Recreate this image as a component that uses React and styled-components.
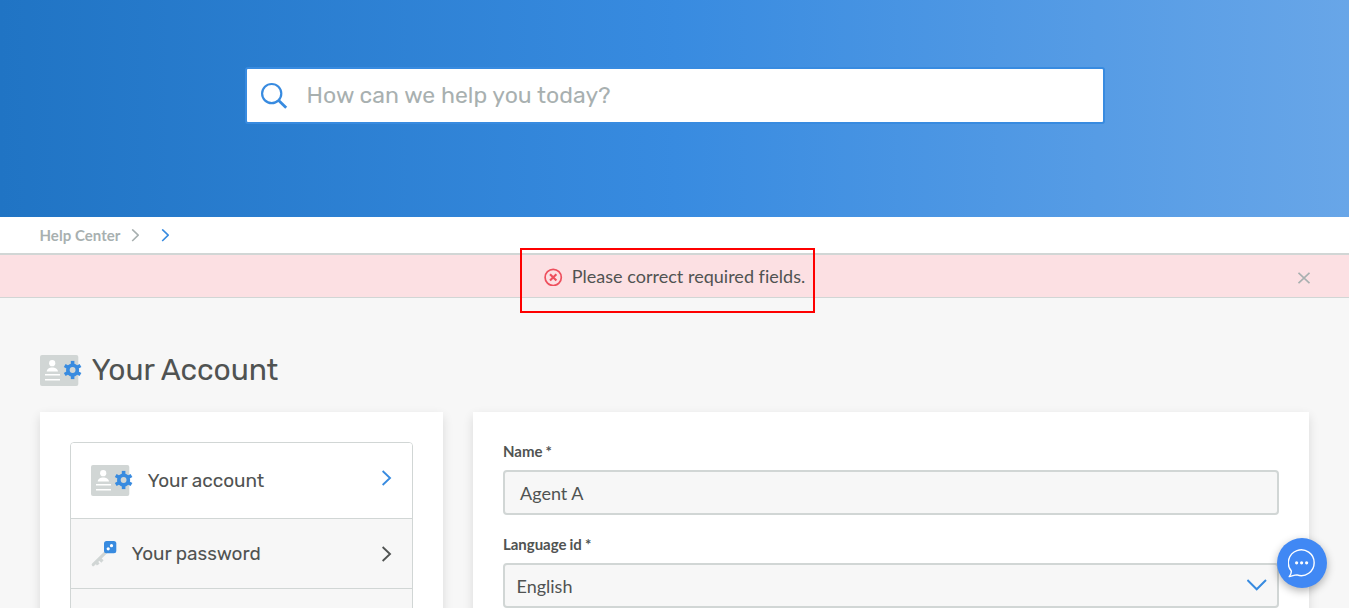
import React from "react";
import styled, { createGlobalStyle } from "styled-components";

const Global = createGlobalStyle`
  *, *::before, *::after { box-sizing: border-box; }
  body {
    margin: 0;
    background: #f7f7f7;
    color: #505352;
    font-family: Lato, "Liberation Sans", sans-serif;
    overflow: hidden;
  }
  svg { display: block; flex: none; }
`;

const heading = `font-family: Rubik, Inter, "Liberation Sans", sans-serif; font-weight: 400;`;

const Page = styled.div`
  position: relative;
  height: 608px;
  overflow: hidden;
`;

const Hero = styled.header`
  height: 217px;
  padding-top: 67px;
  display: flex;
  justify-content: center;
  align-items: flex-start;
  background: linear-gradient(90deg, #2074c4 0%, #388be0 50%, #68a6e8 100%);
`;

const SearchBox = styled.label`
  display: flex;
  align-items: center;
  width: 860px;
  height: 57px;
  margin-left: 1px;
  padding-left: 12px;
  gap: 18.5px;
  border: 2px solid #388be0;
  border-radius: 3px;
  background: #fff;
`;

const SearchInput = styled.input`
  flex: 1;
  border: 0;
  outline: 0;
  padding: 0 0 2px;
  background: transparent;
  ${heading}
  font-size: 23px;
  letter-spacing: 0.04px;
  &::placeholder { color: #a8b0b0; opacity: 1; }
`;

const Breadcrumbs = styled.nav`
  display: flex;
  align-items: center;
  gap: 22px;
  height: 38px;
  padding: 0 40px 0 39.5px;
  border-bottom: 2px solid #d1d6d5;
  background: #fff;
  font-size: 15px;
  font-weight: 700;
  letter-spacing: 0.04px;
  color: #a8b0b0;
`;

const Crumb = styled.span`
  display: flex;
  align-items: center;
  gap: 11px;
`;

const Alert = styled.div`
  display: grid;
  grid-template-columns: 1fr auto 1fr;
  align-items: center;
  height: 43px;
  padding: 0 39px 0 40px;
  border-bottom: 1px solid #d1d6d5;
  background: #fce0e3;
`;

const AlertText = styled.div`
  grid-column: 2;
  display: flex;
  align-items: center;
  gap: 9px;
  margin-left: -1px;
  font-size: 18px;
  letter-spacing: 0.02px;
  line-height: 24px;
`;

const Close = styled.button`
  justify-self: end;
  display: flex;
  padding: 3px 0 0;
  border: 0;
  background: none;
`;

const Highlight = styled.div`
  position: absolute;
  left: 520px;
  top: 248px;
  width: 295px;
  height: 65px;
  border: 2px solid #fe0000;
`;

const TitleRow = styled.div`
  display: flex;
  align-items: center;
  gap: 9.5px;
  height: 114px;
  padding: 31px 40px 0;
`;

const Title = styled.h1`
  margin: 0 0 1px;
  ${heading}
  font-size: 30px;
  line-height: 36px;
  letter-spacing: -0.06px;
`;

const Columns = styled.main`
  display: flex;
  gap: 30px;
  padding: 0 40px;
`;

const Card = styled.section`
  flex: ${(p) => (p.$width ? `0 0 ${p.$width}px` : 1)};
  height: 500px;
  padding: 30px;
  background: #fff;
  box-shadow: 0 4px 10px rgba(0, 0, 0, 0.12);
`;

const Menu = styled.ul`
  margin: 0;
  padding: 0;
  list-style: none;
  border: 1px solid #d1d6d5;
  border-radius: 4px;
  overflow: hidden;
`;

const MenuItem = styled.li`
  display: flex;
  align-items: center;
  height: ${(p) => (p.$active ? 76 : 70)}px;
  padding: 0 20px;
  border-bottom: 1px solid #d1d6d5;
  background: ${(p) => (p.$active ? "#fff" : "#f7f7f7")};
`;

const MenuLabel = styled.span`
  flex: 1;
  margin-left: 14.5px;
  ${heading}
  font-size: 19px;
  line-height: 24px;
  letter-spacing: -0.03px;
`;

const ArrowSlot = styled.span`
  padding-bottom: ${(p) => p.$lift || 0}px;
`;

const Field = styled.div`
  display: flex;
  flex-direction: column;
  margin-bottom: 20px;
`;

const Label = styled.label`
  height: 28px;
  line-height: 18px;
  font-size: 15px;
  font-weight: 700;
  letter-spacing: -0.03px;
  word-spacing: -0.5px;
`;

const Control = styled.div`
  display: flex;
  align-items: center;
  justify-content: space-between;
  height: 45px;
  padding: 0 9px 0 ${(p) => p.$indent}px;
  border: 2px solid #d1d6d5;
  border-radius: 4px;
  background: #f7f7f7;
  font-size: 18px;
`;

const ChatButton = styled.button`
  position: absolute;
  left: 1277px;
  top: 538px;
  width: 50px;
  height: 50px;
  padding: 0;
  border: 0;
  border-radius: 50%;
  display: flex;
  align-items: center;
  justify-content: center;
  background: #4088f4;
  box-shadow: 0 3px 8px rgba(0, 0, 0, 0.3);
`;

const SmallChevron = ({ color }) => (
  <svg width="8" height="13" viewBox="0 0 8 13" fill="none" stroke={color} strokeWidth="1.6">
    <path d="M1.2 0.4 L7.2 6.2 L1.2 12" />
  </svg>
);

const Chevron = ({ color }) => (
  <svg width="10" height="16" viewBox="0 0 10 16" fill="none" stroke={color} strokeWidth="1.9">
    <path d="M0.6 1 L8 8 L0.6 15" />
  </svg>
);

const AccountIcon = () => (
  <svg width="42" height="31" viewBox="0 0 42 31">
    <rect width="38.3" height="31" rx="2" fill="#d1d6d5" />
    <circle cx="12.2" cy="8.2" r="3.1" fill="#fff" />
    <path d="M6.7 16.6 C7 13.5 9.4 12.5 12.2 12.5 S17.6 13.5 18 16.6Z" fill="#fff" />
    <path d="M5 19.7h15M5 24.8h15" stroke="#fff" strokeWidth="1.5" />
    <g transform="translate(32.6 15)" fill="#388be0">
      {[0, 60, 120].map((a) => (
        <rect key={a} x="-1.8" y="-9.1" width="3.6" height="18.2" transform={`rotate(${a})`} />
      ))}
      <circle r="6.6" />
      <circle r="2.9" fill="#d1d6d5" />
    </g>
  </svg>
);

const KeyIcon = () => (
  <svg width="26" height="26" viewBox="0 0 26 26">
    <path d="M2.2 23.6 L15 11.2" stroke="#d1d6d5" strokeWidth="3" strokeLinecap="round" />
    <path d="M5.5 21 L7.2 23.6 M8.8 18 L11.5 20.5" stroke="#d1d6d5" strokeWidth="3.2" />
    <rect x="13" y="0" width="12.3" height="12.3" rx="2.5" fill="#388be0" />
    <circle cx="17.2" cy="7.8" r="1.6" fill="#fff" />
    <circle cx="20.5" cy="4.7" r="1.6" fill="#fff" />
  </svg>
);

export default function App() {
  return (
    <Page>
      <Global />
      <Hero>
        <SearchBox>
          <svg width="29" height="28" viewBox="0 0 29 28" fill="none" stroke="#388be0">
            <circle cx="12.7" cy="11.6" r="9.6" strokeWidth="2.2" />
            <path d="M19.7 18.4 L27.2 25.8" strokeWidth="2.8" />
          </svg>
          <SearchInput placeholder="How can we help you today?" />
        </SearchBox>
      </Hero>
      <Breadcrumbs>
        <Crumb>
          Help Center
          <SmallChevron color="#a8b0b0" />
        </Crumb>
        <Crumb>
          <SmallChevron color="#388be0" />
        </Crumb>
      </Breadcrumbs>
      <Alert>
        <AlertText>
          <svg width="19" height="19" viewBox="0 0 19 19" fill="none" stroke="#ee4f5d">
            <circle cx="9.2" cy="10.4" r="8.1" strokeWidth="1.7" />
            <path d="M6 7.2 L12.4 13.6 M12.4 7.2 L6 13.6" strokeWidth="2.1" />
          </svg>
          Please correct required fields.
        </AlertText>
        <Close aria-label="Close">
          <svg width="12" height="12" viewBox="0 0 12 12" stroke="#a8b0b0" strokeWidth="1.7">
            <path d="M0.5 0.8 L11.5 11.2 M11.5 0.8 L0.5 11.2" />
          </svg>
        </Close>
      </Alert>
      <TitleRow>
        <AccountIcon />
        <Title>Your Account</Title>
      </TitleRow>
      <Columns>
        <Card $width={403}>
          <Menu>
            <MenuItem $active>
              <AccountIcon />
              <MenuLabel>Your account</MenuLabel>
              <ArrowSlot $lift={5}>
                <Chevron color="#388be0" />
              </ArrowSlot>
            </MenuItem>
            <MenuItem>
              <KeyIcon />
              <MenuLabel>Your password</MenuLabel>
              <ArrowSlot>
                <Chevron color="#505352" />
              </ArrowSlot>
            </MenuItem>
            <MenuItem />
          </Menu>
        </Card>
        <Card>
          <Field>
            <Label>Name *</Label>
            <Control $indent={15}>Agent A</Control>
          </Field>
          <Field>
            <Label>Language id *</Label>
            <Control $indent={11.5}>
              English
              <svg width="21" height="14" viewBox="0 0 21 14" fill="none" stroke="#388be0" strokeWidth="2">
                <path d="M0.4 1 L9.7 10.3 L19 1" />
              </svg>
            </Control>
          </Field>
        </Card>
      </Columns>
      <Highlight />
      <ChatButton aria-label="Chat">
        <svg width="28" height="29" viewBox="0 0 28 29" fill="none" stroke="#fff" strokeWidth="1.4">
          <path d="M1.2 27.6 C3 25.5 3.6 23.8 3.2 21.8 A12.9 12.9 0 1 1 9 25.9 C6.5 26 4 27 1.2 27.6Z" strokeLinejoin="round" />
          <g fill="#fff" stroke="none">
            <circle cx="8.6" cy="13.8" r="1.6" />
            <circle cx="13.6" cy="13.8" r="1.6" />
            <circle cx="18.6" cy="13.8" r="1.6" />
          </g>
        </svg>
      </ChatButton>
    </Page>
  );
}
